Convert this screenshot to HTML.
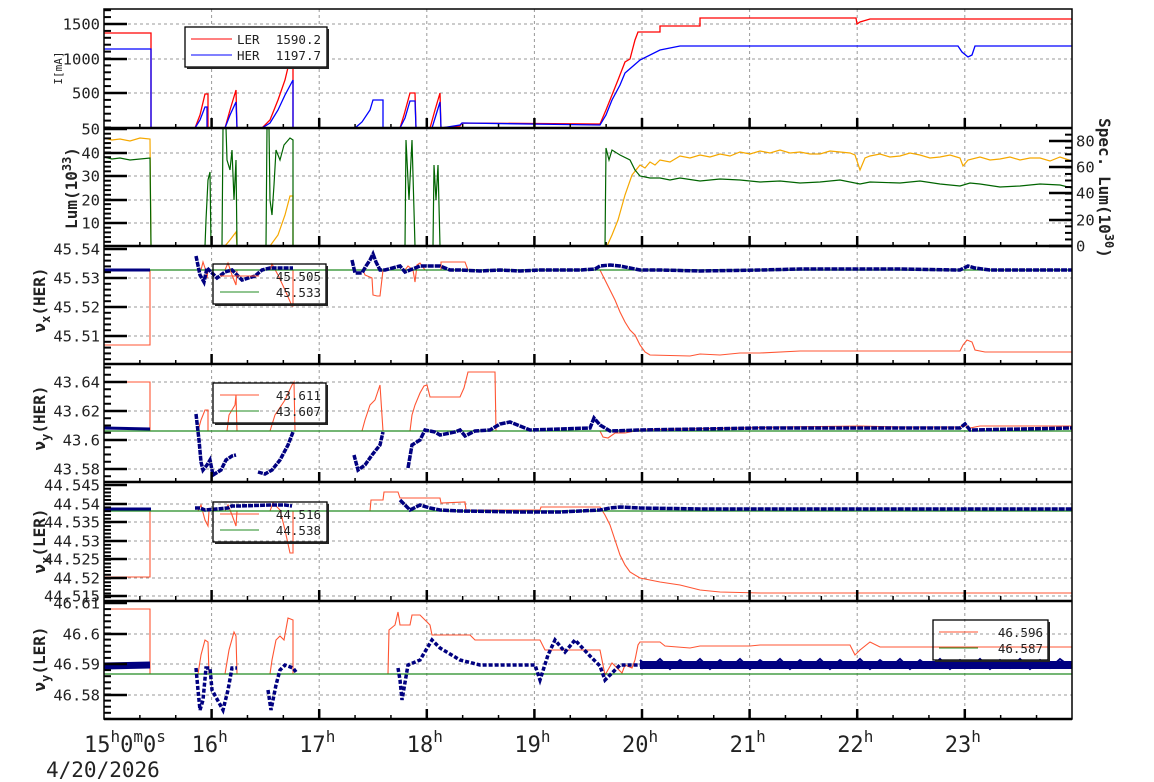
<!DOCTYPE html>
<html><head><meta charset="utf-8"><style>
html,body{margin:0;padding:0;background:#fff;width:1154px;height:782px;overflow:hidden}
svg text{font-family:"DejaVu Sans Mono","Liberation Mono",monospace;fill:#222}
</style></head><body>
<svg id="s" width="1154" height="782" xmlns="http://www.w3.org/2000/svg">
<g id="grid"></g>
<g id="data" fill="none" stroke-linejoin="miter">
<polyline stroke="#f00" stroke-width="1.3" points="104,33 151,33 151,128 195,128 200,115 205,94 208,94 208,128 225,128 230,110 236,90 237,128 262,128 270,120 278,100 285,80 290,59 293,59 293,128 400,128 404,115 410,93 415,93 416,128 430,128 435,110 440,93 441,128 460,126 462,123 600,124 606,110 612,95 618,80 625,62 630,59 635,40 638,32 660,32 660,26 700,26 700,18 856,18 857,24 860,22 870,19 1072,19"/>
<polyline stroke="#00f" stroke-width="1.3" points="104,49 151,49 151,128 195,128 200,120 205,107 207,107 207,128 225,128 230,115 236,102 237,128 262,128 270,123 278,110 285,95 293,80 293,128 355,128 362,122 370,110 373,100 383,100 383,128 400,128 405,118 410,101 415,101 416,128 432,128 436,115 440,102 441,128 460,125 462,123 600,125 606,115 612,100 620,85 625,73 640,60 660,50 680,46 958,46 962,52 968,57 972,55 975,46 1072,46"/>
<polyline stroke="#f5a800" stroke-width="1.2" points="104,138 112,140 120,139 130,141 140,138 150,139 151,246 225,246 230,240 236,232 237,246 270,246 278,235 285,215 290,196 293,196 293,246 607,246 612,235 618,220 625,195 632,175 640,165 645,168 650,162 655,165 660,160 670,162 680,156 690,158 700,155 710,157 720,154 730,156 740,152 750,154 760,151 770,153 780,150 790,153 800,152 810,154 820,154 830,151 840,152 850,153 855,155 860,170 865,158 870,156 880,154 890,157 900,156 910,153 920,155 930,158 940,157 950,155 960,158 963,166 968,160 980,157 990,160 1000,159 1010,157 1020,160 1030,158 1040,158 1050,161 1060,157 1072,161"/>
<polyline stroke="#006400" stroke-width="1.2" points="104,157 112,159 120,158 130,160 150,158 151,246 205,246 206,220 208,180 210,172 211,246 222,246 223,128 226,128 227,160 230,170 232,150 234,200 236,160 237,246 266,246 267,128 269,128 270,200 272,215 274,185 276,150 280,160 284,145 290,138 293,140 293,246 405,246 406,140 409,200 412,140 415,246 433,246 434,165 436,200 438,165 440,246 605,246 606,148 609,160 612,150 620,155 630,160 635,170 640,176 650,178 660,178 670,180 680,178 700,181 720,179 740,180 760,182 780,181 800,183 820,182 840,180 860,184 870,182 900,183 920,181 940,184 960,186 970,183 980,184 1000,187 1020,186 1040,184 1060,185 1072,188"/>
<polyline stroke="#ff5533" stroke-width="1.1" points="104,345 150,345 150,270 201,270 203,262 205,268 207,278 208,270 225,270 228,263 232,275 236,285 237,270 270,270 272,264 278,275 285,290 292,306 293,306 293,270 363,270 365,275 372,278 373,295 377,296 380,296 383,270 405,270 408,266 413,270 415,282 417,265 420,263 425,270 441,270 441,262 465,262 468,270 600,270 605,280 610,290 615,300 620,312 625,322 630,330 635,335 640,345 645,352 650,355 690,356 700,354 720,355 740,353 760,353 800,351 840,351 880,351 960,351 963,345 967,340 972,342 975,350 985,352 1072,352"/>
<line x1="104" y1="270" x2="1072" y2="270" stroke="#228b22" stroke-width="1.2"/>
<polyline stroke="#000080" stroke-width="3" points="104,270 150,270"/>
<polyline stroke="#000080" stroke-width="3.5" stroke-dasharray="5 1" points="196,256 200,275 204,282 207,268 217,278 225,272 232,270 242,280 255,276 262,270 270,268 290,268 293,268"/>
<polyline stroke="#000080" stroke-width="3.5" stroke-dasharray="6 1" points="352,260 355,273 362,273 366,266 370,260 373,254 376,262 380,270 385,270 400,266 405,272 410,270 420,266 430,266 440,266 450,270 460,270 480,271 500,270 520,271 540,270 560,270 580,270 595,269 600,266 610,265 620,266 630,268 640,270 660,270 700,271 760,270 800,269 860,269 900,269 960,270 968,266 975,268 990,270 1072,270"/>
<polyline stroke="#ff5533" stroke-width="1.1" points="104,382 150,382 150,431 198,431 201,420 205,410 208,410 208,431 227,431 229,415 235,405 236,395 237,431 270,431 275,415 285,400 292,385 294,382 295,431 362,431 365,420 370,405 375,400 380,385 383,431 410,431 412,415 415,405 420,393 424,386 427,385 430,397 460,397 464,388 468,372 495,372 496,431 600,431 603,437 608,438 615,433 625,433 640,430 680,429 740,428 780,427 860,426 900,427 960,427 965,425 970,428 980,426 1072,426"/>
<line x1="104" y1="431" x2="1072" y2="431" stroke="#228b22" stroke-width="1.2"/>
<polyline stroke="#000080" stroke-width="3" points="104,428 150,429"/>
<polyline stroke="#000080" stroke-width="3.5" stroke-dasharray="5 1" points="196,414 199,440 201,462 203,470 207,465 210,460 213,475 221,470 226,460 232,456 236,455"/>
<polyline stroke="#000080" stroke-width="3.5" stroke-dasharray="5 1" points="258,472 265,474 272,470 280,460 288,445 293,432"/>
<polyline stroke="#000080" stroke-width="3.5" stroke-dasharray="5 1" points="354,455 358,470 365,465 372,455 380,445 383,432"/>
<polyline stroke="#000080" stroke-width="3.5" stroke-dasharray="6 1" points="408,468 412,445 420,440 425,430 435,432 440,435 455,432 460,430 465,436 475,431 490,430 500,424 510,422 520,426 530,430 560,429 590,428 594,418 600,425 610,431 640,430 700,429 760,428 860,428 960,428 965,424 970,430 1072,428"/>
<polyline stroke="#ff5533" stroke-width="1.1" points="104,577 150,577 150,511 198,511 201,505 205,520 208,526 209,511 225,511 228,505 232,515 236,526 237,511 270,511 273,503 280,510 285,530 290,553 293,553 293,511 370,511 371,500 383,500 384,492 398,492 400,498 440,498 441,503 465,502 466,510 540,510 541,507 600,507 605,515 610,525 615,540 620,555 625,565 630,572 640,578 660,582 680,585 700,590 720,592 760,593 800,593 860,593 960,593 1072,593"/>
<line x1="104" y1="511" x2="1072" y2="511" stroke="#228b22" stroke-width="1.2"/>
<polyline stroke="#000080" stroke-width="3" points="104,509 151,509"/>
<polyline stroke="#000080" stroke-width="3.5" stroke-dasharray="5 1" points="195,508 200,508 205,510 228,508 232,506 240,506 270,505 285,505 292,506"/>
<polyline stroke="#000080" stroke-width="3.5" stroke-dasharray="6 1" points="400,500 405,505 410,510 420,505 430,508 440,510 460,511 520,512 560,512 600,510 610,508 620,507 640,508 700,509 800,509 900,509 1072,509"/>
<polyline stroke="#ff5533" stroke-width="1.1" points="104,609 150,609 150,674 198,674 201,655 205,640 208,642 209,674 225,674 229,650 234,632 236,636 237,674 270,674 272,660 276,640 280,636 284,640 288,618 293,620 293,674 388,674 389,630 395,625 398,612 400,625 410,625 412,615 420,615 425,620 430,625 432,635 470,635 475,640 540,640 545,650 600,650 605,675 612,663 617,668 622,673 625,665 632,668 635,660 638,645 640,642 660,642 665,646 690,648 700,646 750,646 760,645 820,645 850,645 855,655 860,650 870,642 880,647 960,647 1072,647"/>
<line x1="104" y1="674" x2="1072" y2="674" stroke="#228b22" stroke-width="1.2"/>
<polyline stroke="#000080" stroke-width="7" points="104,666 150,665"/>
<polyline stroke="#000080" stroke-width="3.5" stroke-dasharray="4 2" points="196,668 198,690 200,710 203,700 206,668 210,668 212,690 223,710 228,690 232,668 237,668"/>
<polyline stroke="#000080" stroke-width="3.5" stroke-dasharray="4 2" points="268,690 271,710 276,685 280,670 285,665 293,668 296,672"/>
<polyline stroke="#000080" stroke-width="3.5" stroke-dasharray="4 2" points="398,668 400,680 402,700 408,665 420,660 432,640 440,648 460,660 480,665 520,665 535,665 540,680 548,655 555,640 565,652 575,640 590,656 600,666 605,680 620,665 640,665"/>
<polyline stroke="#000080" stroke-width="8" points="640,665 1072,665"/>
<polyline stroke="#000080" stroke-width="2" points="640,660 650,668 660,659 670,669 680,660 690,668 700,659 710,669 720,660 730,668 740,659 750,669 760,660 770,668 780,659 790,669 800,660 810,668 820,659 830,669 840,660 850,668 860,659 870,669 880,660 890,668 900,659 910,669 920,660 930,668 940,659 950,669 960,660 970,668 980,659 990,669 1000,660 1010,668 1020,659 1030,669 1040,660 1050,668 1060,659 1072,668"/>
</g>
<g id="axes"></g>
<g id="legends" font-size="12.5">
<rect x="185" y="27" width="142" height="40" fill="#fff" stroke="#000" stroke-width="1.3"/>
<line x1="328" y1="29" x2="328" y2="69" stroke="#222" stroke-width="2"/><line x1="187" y1="68" x2="328" y2="68" stroke="#222" stroke-width="2"/>
<line x1="191" y1="39" x2="232" y2="39" stroke="#f00"/><line x1="191" y1="55" x2="232" y2="55" stroke="#00f"/>
<text x="237" y="44">LER</text><text x="321" y="44" text-anchor="end">1590.2</text>
<text x="237" y="60">HER</text><text x="321" y="60" text-anchor="end">1197.7</text>
<rect x="213" y="264" width="113" height="40" fill="none" stroke="#000" stroke-width="1.3"/>
<line x1="327" y1="266" x2="327" y2="306" stroke="#222" stroke-width="2"/><line x1="215" y1="305" x2="327" y2="305" stroke="#222" stroke-width="2"/>
<line x1="220" y1="276" x2="259" y2="276" stroke="#ff5533"/><line x1="220" y1="292" x2="259" y2="292" stroke="#228b22"/>
<text x="321" y="281" text-anchor="end">45.505</text><text x="321" y="297" text-anchor="end">45.533</text>
<rect x="213" y="383" width="113" height="40" fill="none" stroke="#000" stroke-width="1.3"/>
<line x1="327" y1="385" x2="327" y2="425" stroke="#222" stroke-width="2"/><line x1="215" y1="424" x2="327" y2="424" stroke="#222" stroke-width="2"/>
<line x1="220" y1="395" x2="259" y2="395" stroke="#ff5533"/><line x1="220" y1="411" x2="259" y2="411" stroke="#228b22"/>
<text x="321" y="400" text-anchor="end">43.611</text><text x="321" y="416" text-anchor="end">43.607</text>
<rect x="213" y="502" width="114" height="40" fill="none" stroke="#000" stroke-width="1.3"/>
<line x1="328" y1="504" x2="328" y2="544" stroke="#222" stroke-width="2"/><line x1="215" y1="543" x2="328" y2="543" stroke="#222" stroke-width="2"/>
<line x1="220" y1="514" x2="259" y2="514" stroke="#ff5533"/><line x1="220" y1="530" x2="259" y2="530" stroke="#228b22"/>
<text x="321" y="519" text-anchor="end">44.516</text><text x="321" y="535" text-anchor="end">44.538</text>
<rect x="933" y="620" width="115" height="40" fill="none" stroke="#000" stroke-width="1.3"/>
<line x1="1049" y1="622" x2="1049" y2="662" stroke="#222" stroke-width="2"/><line x1="935" y1="661" x2="1049" y2="661" stroke="#222" stroke-width="2"/>
<line x1="939" y1="632" x2="978" y2="632" stroke="#ff5533"/><line x1="939" y1="648" x2="978" y2="648" stroke="#228b22"/>
<text x="1043" y="637" text-anchor="end">46.596</text><text x="1043" y="653" text-anchor="end">46.587</text>
</g>
<g id="labels">
<text transform="translate(62,68) rotate(-90)" font-size="11" text-anchor="middle">I[mA]</text>
<text transform="translate(77,188) rotate(-90)" font-size="16" font-weight="bold" text-anchor="middle">Lum(10<tspan dy="-6" font-size="12">33</tspan><tspan dy="6">)</tspan></text>
<text transform="translate(1099,188) rotate(90)" font-size="16" font-weight="bold" text-anchor="middle">Spec. Lum(10<tspan dy="-6" font-size="12">30</tspan><tspan dy="6">)</tspan></text>
<text transform="translate(45,300) rotate(-90)" font-size="16" font-weight="bold" text-anchor="middle">ν<tspan dy="5" font-size="12">x</tspan><tspan dy="-5">(HER)</tspan></text>
<text transform="translate(45,418) rotate(-90)" font-size="16" font-weight="bold" text-anchor="middle">ν<tspan dy="5" font-size="12">y</tspan><tspan dy="-5">(HER)</tspan></text>
<text transform="translate(45,541) rotate(-90)" font-size="16" font-weight="bold" text-anchor="middle">ν<tspan dy="5" font-size="12">x</tspan><tspan dy="-5">(LER)</tspan></text>
<text transform="translate(45,659) rotate(-90)" font-size="16" font-weight="bold" text-anchor="middle">ν<tspan dy="5" font-size="12">y</tspan><tspan dy="-5">(LER)</tspan></text>
<text x="46" y="777" font-size="21">4/20/2026</text>
</g>
</svg>
<script>
var NS="http://www.w3.org/2000/svg";
function el(p,t,a,txt){var e=document.createElementNS(NS,t);for(var k in a)e.setAttribute(k,a[k]);if(txt!=null)e.textContent=txt;p.appendChild(e);return e;}
var G=document.getElementById("grid"),A=document.getElementById("axes");
var L=104,R=1072,H=107.6;
var panels=[[9,128],[128,246],[246,364],[364,482],[482,600],[601,719]];
panels.forEach(function(p){for(var h=1;h<9;h++){var x=L+h*H;el(G,"line",{x1:x,y1:p[0],x2:x,y2:p[1],stroke:"#999","stroke-dasharray":"3 3","stroke-width":1});}});
var yl=[
 [[24,"1500"],[59,"1000"],[93,"500"]],
 [[129,"50"],[153,"40"],[176,"30"],[200,"20"],[223,"10"]],
 [[249,"45.54"],[278,"45.53"],[307,"45.52"],[336,"45.51"]],
 [[382,"43.64"],[411,"43.62"],[440,"43.6"],[469,"43.58"]],
 [[485,"44.545"],[504,"44.54"],[522,"44.535"],[541,"44.53"],[559,"44.525"],[578,"44.52"],[596,"44.515"]],
 [[603,"46.61"],[634,"46.6"],[664,"46.59"],[695,"46.58"]]
];
var minorStep=[6.9,4.7,5.8,7.25,3.74,6.1];
panels.forEach(function(p,i){
 yl[i].forEach(function(l){
  if(l[0]>p[0]+3 && l[0]<p[1]-2) el(G,"line",{x1:L,y1:l[0],x2:R,y2:l[0],stroke:"#999","stroke-dasharray":"3 3","stroke-width":1});
  el(A,"line",{x1:L,y1:l[0],x2:L+23,y2:l[0],stroke:"#000","stroke-width":2.5});
  el(A,"text",{x:L-4,y:l[0]+5.5,"font-size":15.5,"text-anchor":"end"},l[1]);
 });
 var y0=yl[i][0][0];
 for(var y=y0-minorStep[i];y>p[0];y-=minorStep[i]) el(A,"line",{x1:L,y1:y,x2:L+7,y2:y,stroke:"#000","stroke-width":2});
 for(var y=y0+minorStep[i];y<p[1];y+=minorStep[i]) el(A,"line",{x1:L,y1:y,x2:L+7,y2:y,stroke:"#000","stroke-width":2});
 for(var m=1;m<27;m++){var x=L+m*H/3;var maj=(m%3==0);el(A,"line",{x1:x,y1:p[1],x2:x,y2:p[1]-(maj?10:4),stroke:"#000","stroke-width":maj?2.5:1.5});}
});
[[141,"80"],[167,"60"],[193,"40"],[220,"20"],[246,"0"]].forEach(function(l){
 el(A,"line",{x1:R,y1:l[0],x2:R-23,y2:l[0],stroke:"#000","stroke-width":2.5});
 el(A,"text",{x:R+4,y:l[0]+5.5,"font-size":15.5},l[1]);
});
for(var y=246-6.55;y>130;y-=6.55) el(A,"line",{x1:R,y1:y,x2:R-7,y2:y,stroke:"#000","stroke-width":2});
el(A,"rect",{x:L,y:9,width:R-L,height:710,fill:"none",stroke:"#000","stroke-width":1.5});
panels.forEach(function(p,i){if(i>0)el(A,"line",{x1:L,y1:p[0],x2:R,y2:p[0],stroke:"#000","stroke-width":2.5});});
el(A,"line",{x1:L,y1:719,x2:R,y2:719,stroke:"#000","stroke-width":2.5});
var hl=["16","17","18","19","20","21","22","23"];
hl.forEach(function(t,i){var x=L+(i+1)*H;var tx=el(A,"text",{x:x-20,y:752,"font-size":22});tx.textContent=t;el(tx,"tspan",{dy:-10,"font-size":16},"h");});
var f=el(A,"text",{x:84,y:752,"font-size":22});
f.appendChild(document.createTextNode("15"));el(f,"tspan",{dy:-10,"font-size":16},"h");el(f,"tspan",{dy:10},"0");el(f,"tspan",{dy:-10,"font-size":16},"m");el(f,"tspan",{dy:10},"0");el(f,"tspan",{dy:-10,"font-size":16},"s");
</script>
</body></html>
